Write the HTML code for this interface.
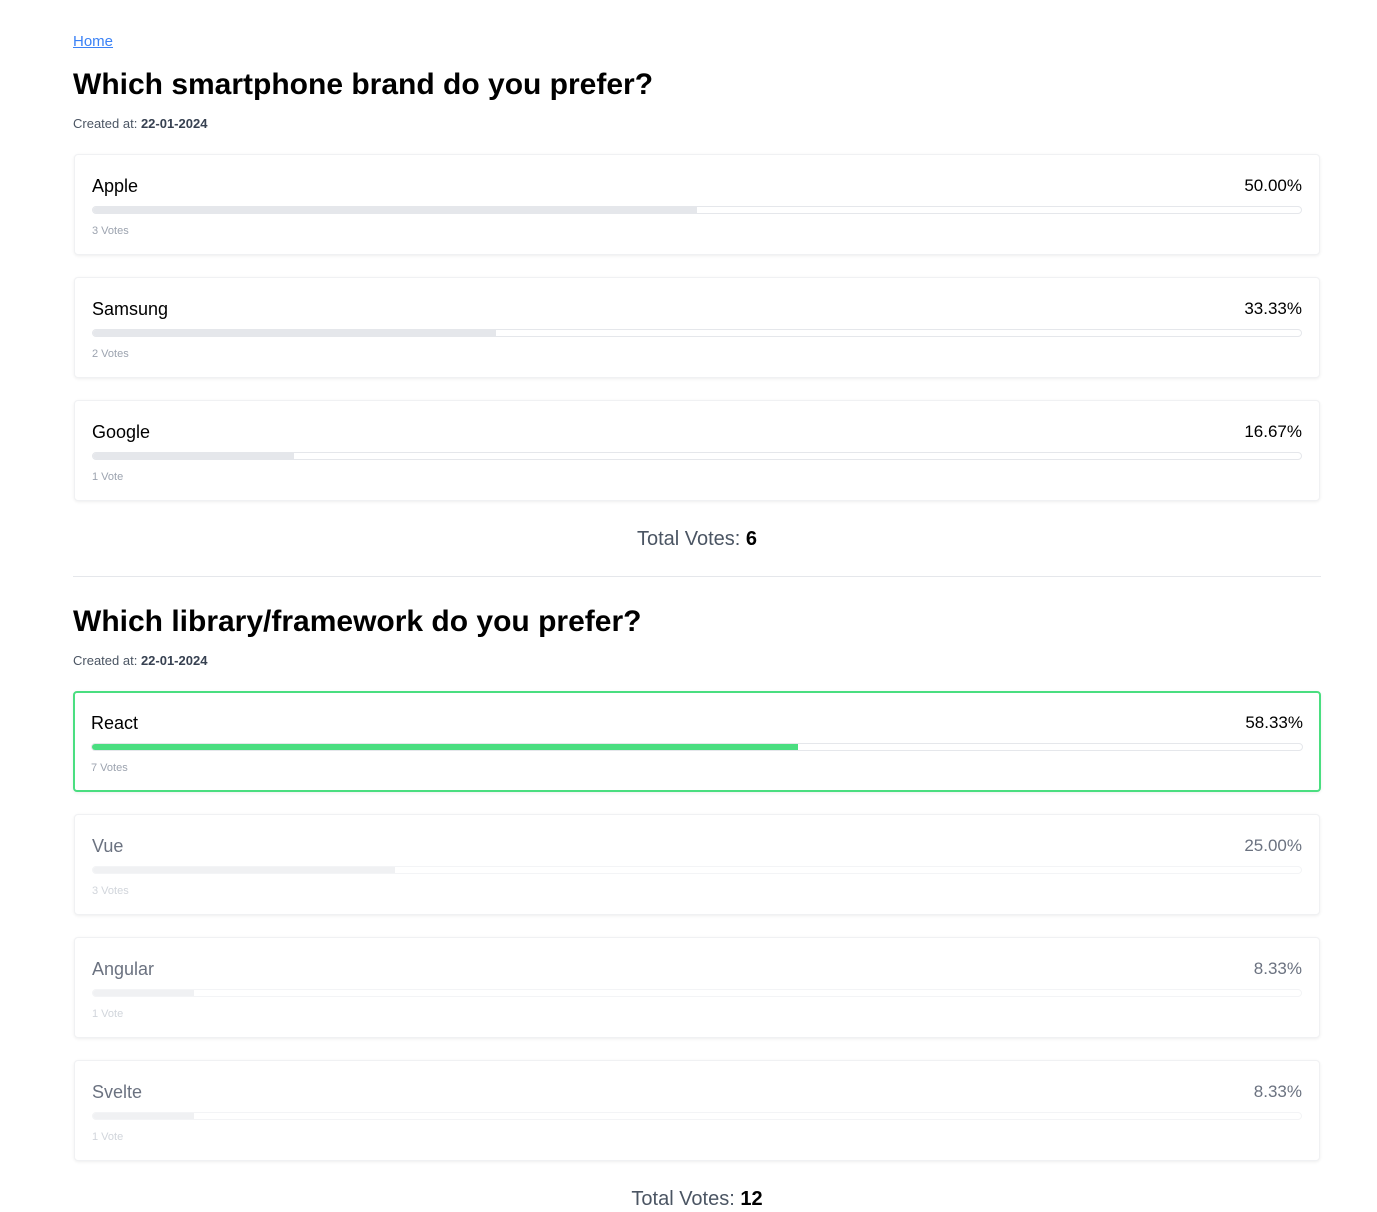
<!DOCTYPE html>
<html><head><meta charset="utf-8"><style>
*{box-sizing:border-box;margin:0;padding:0}
body{background:#fff;font-family:"Liberation Sans","DejaVu Sans",sans-serif;width:1377px;height:1212px;overflow:hidden;position:relative;color:#000}
.w{position:absolute;left:73px;width:1248px}
a{color:#3b82f6;font-size:15px;text-decoration:underline}
h1{font-size:30px;font-weight:bold;line-height:36px}
.c{font-size:13px;color:#4b5563}
.c b{color:#374151}
.card{position:absolute;left:1px;width:1246px;height:101px;border:1px solid #f0f1f3;border-radius:4px;box-shadow:0 1px 3px rgba(0,0,0,.07);background:#fff}
.card .n{position:absolute;left:17px;top:21px;font-size:18px}
.card .p{position:absolute;right:17px;top:21px;font-size:17px}
.card .b{position:absolute;left:17px;right:17px;top:51px;height:8px;border:1px solid #e5e7eb;border-radius:4px;overflow:hidden}
.card .b i{display:block;height:100%;background:#e5e7eb}
.card .v{position:absolute;left:17px;top:70px;font-size:11px;color:#9ca3af}
.sel{border:2px solid #4ade80}
.sel .b i{background:#4ade80}
.f .n,.f .p{color:#6b7280}.f .v{color:#d1d5db}.f .b i{background:#f0f1f3}.f .b{border-color:#f3f4f6}
.t{position:absolute;left:0;width:1248px;text-align:center;font-size:20px;color:#4b5563}
.t b{color:#000}
hr{position:absolute;left:0;width:1248px;border:0;border-top:1px solid #e5e7eb}
</style></head><body>
<div class="w" style="top:0;height:1212px">
<a style="position:absolute;top:33px">Home</a>
<h1 style="position:absolute;top:67px">Which smartphone brand do you prefer?</h1>
<div class="c" style="position:absolute;top:116px">Created at: <b>22-01-2024</b></div>
<div class="card" style="top:154px"><span class="n">Apple</span><span class="p">50.00%</span><div class="b"><i style="width:50%"></i></div><span class="v">3 Votes</span></div>
<div class="card" style="top:277px"><span class="n">Samsung</span><span class="p">33.33%</span><div class="b"><i style="width:33.33%"></i></div><span class="v">2 Votes</span></div>
<div class="card" style="top:400px"><span class="n">Google</span><span class="p">16.67%</span><div class="b"><i style="width:16.67%"></i></div><span class="v">1 Vote</span></div>
<div class="t" style="top:528px">Total Votes: <b>6</b></div>
<hr style="top:576px">
<h1 style="position:absolute;top:604px">Which library/framework do you prefer?</h1>
<div class="c" style="position:absolute;top:653px">Created at: <b>22-01-2024</b></div>
<div class="card sel" style="top:691px;left:0;width:1248px;height:101px"><span class="n" style="left:16px;top:20px">React</span><span class="p" style="right:16px;top:20px">58.33%</span><div class="b" style="left:16px;right:16px;top:50px"><i style="width:58.33%"></i></div><span class="v" style="left:16px;top:69px">7 Votes</span></div>
<div class="card f" style="top:814px"><span class="n">Vue</span><span class="p">25.00%</span><div class="b"><i style="width:25%"></i></div><span class="v">3 Votes</span></div>
<div class="card f" style="top:937px"><span class="n">Angular</span><span class="p">8.33%</span><div class="b"><i style="width:8.33%"></i></div><span class="v">1 Vote</span></div>
<div class="card f" style="top:1060px"><span class="n">Svelte</span><span class="p">8.33%</span><div class="b"><i style="width:8.33%"></i></div><span class="v">1 Vote</span></div>
<div class="t" style="top:1188px">Total Votes: <b>12</b></div>
</div>
</body></html>
